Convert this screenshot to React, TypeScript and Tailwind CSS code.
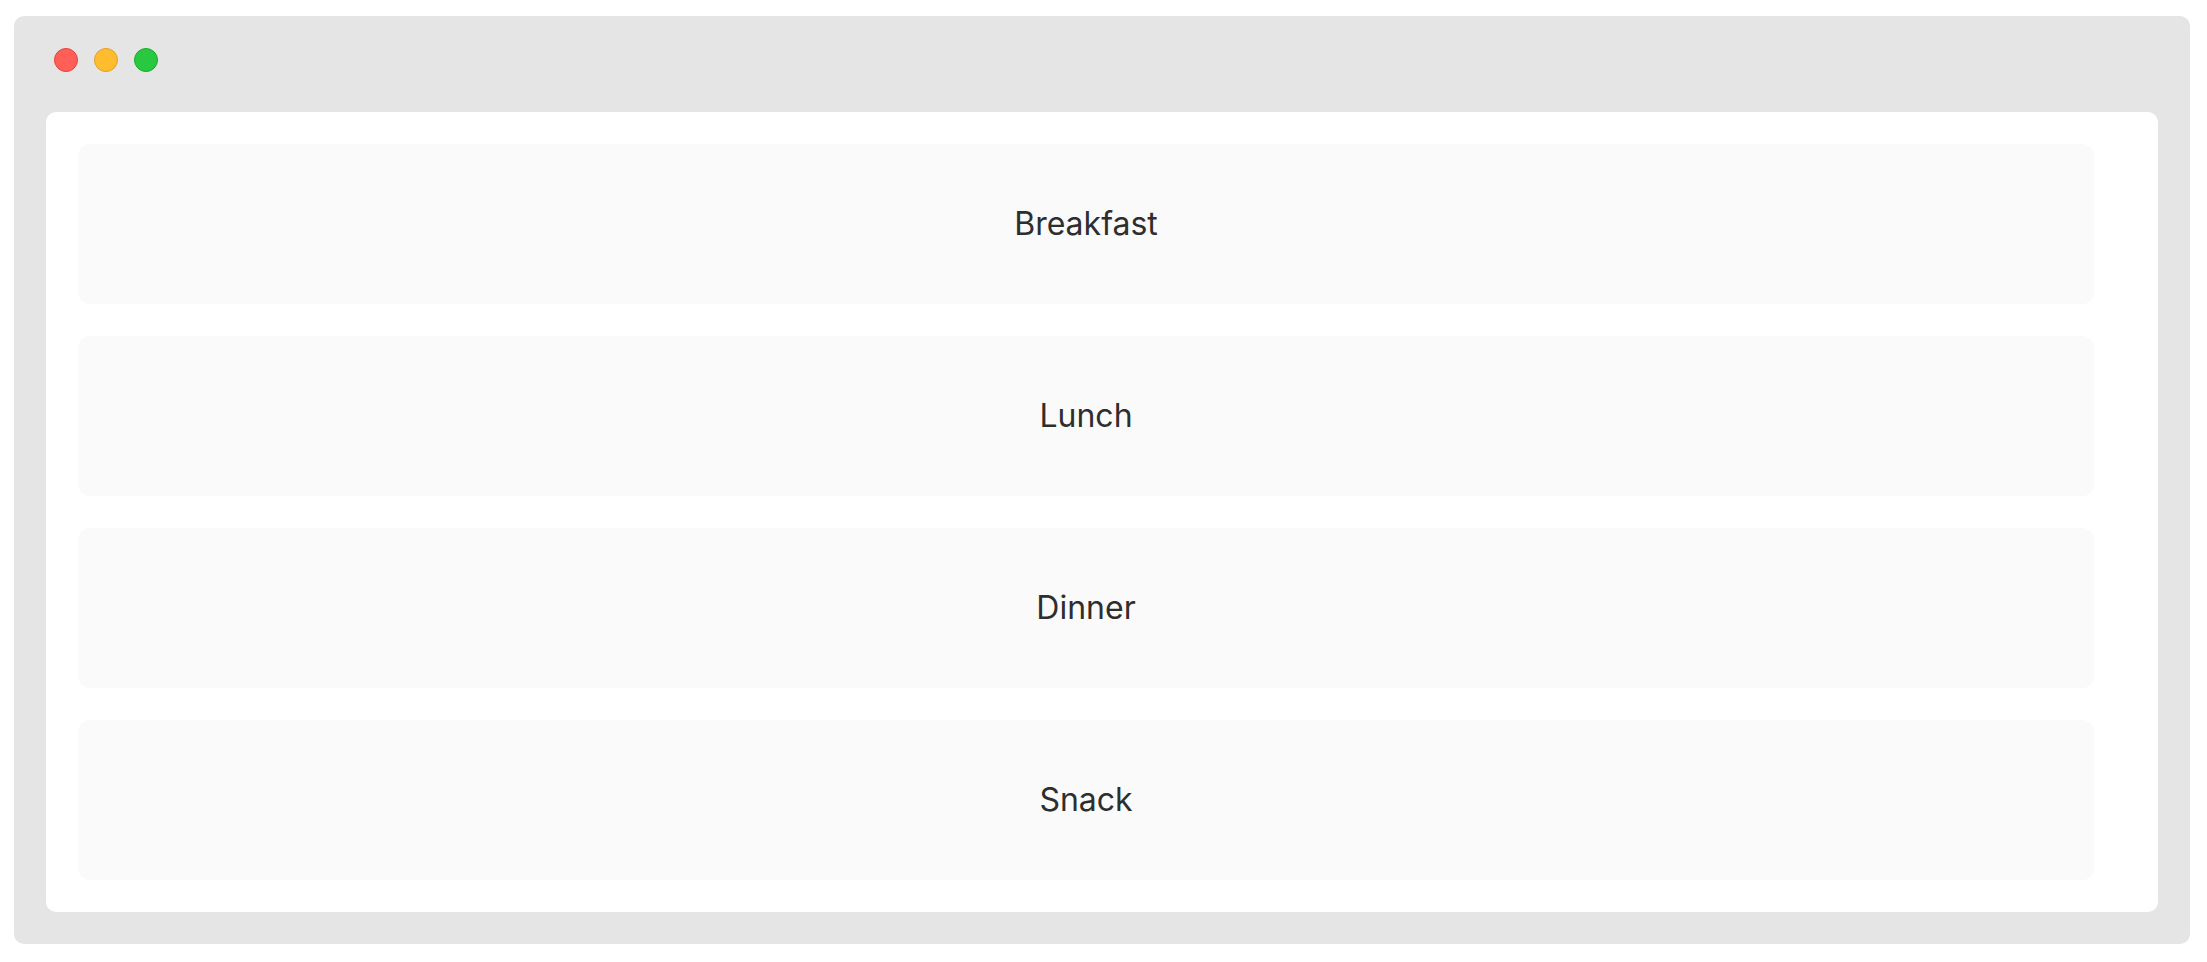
const meals = ['Breakfast', 'Lunch', 'Dinner', 'Snack']

export default function App() {
  return (
    <div className="h-[962px] w-[2207px] bg-white pl-[14px] pt-4" style={{ fontFamily: 'Inter, "Noto Sans", sans-serif' }}>
      <div className="flex h-[928px] w-[2176px] flex-col rounded-[10px] bg-[#e5e5e5] px-8 pb-8">
        <div className="flex h-24 shrink-0 items-center gap-4 pb-[8px] pl-2">
          <span className="h-6 w-6 rounded-full border border-[#e0443e] bg-[#ff5f57]" />
          <span className="h-6 w-6 rounded-full border border-[#dea123] bg-[#febc2e]" />
          <span className="h-6 w-6 rounded-full border border-[#1aab29] bg-[#28c840]" />
        </div>
        <div className="flex flex-1 flex-col gap-8 rounded-[10px] bg-white p-8">
          {meals.map((m) => (
            <div key={m} className="flex h-40 w-[2016px] items-center justify-center rounded-xl bg-[#fafafa]">
              <span className="text-[32px] leading-none text-[#2e2e2e]">{m}</span>
            </div>
          ))}
        </div>
      </div>
    </div>
  )
}
